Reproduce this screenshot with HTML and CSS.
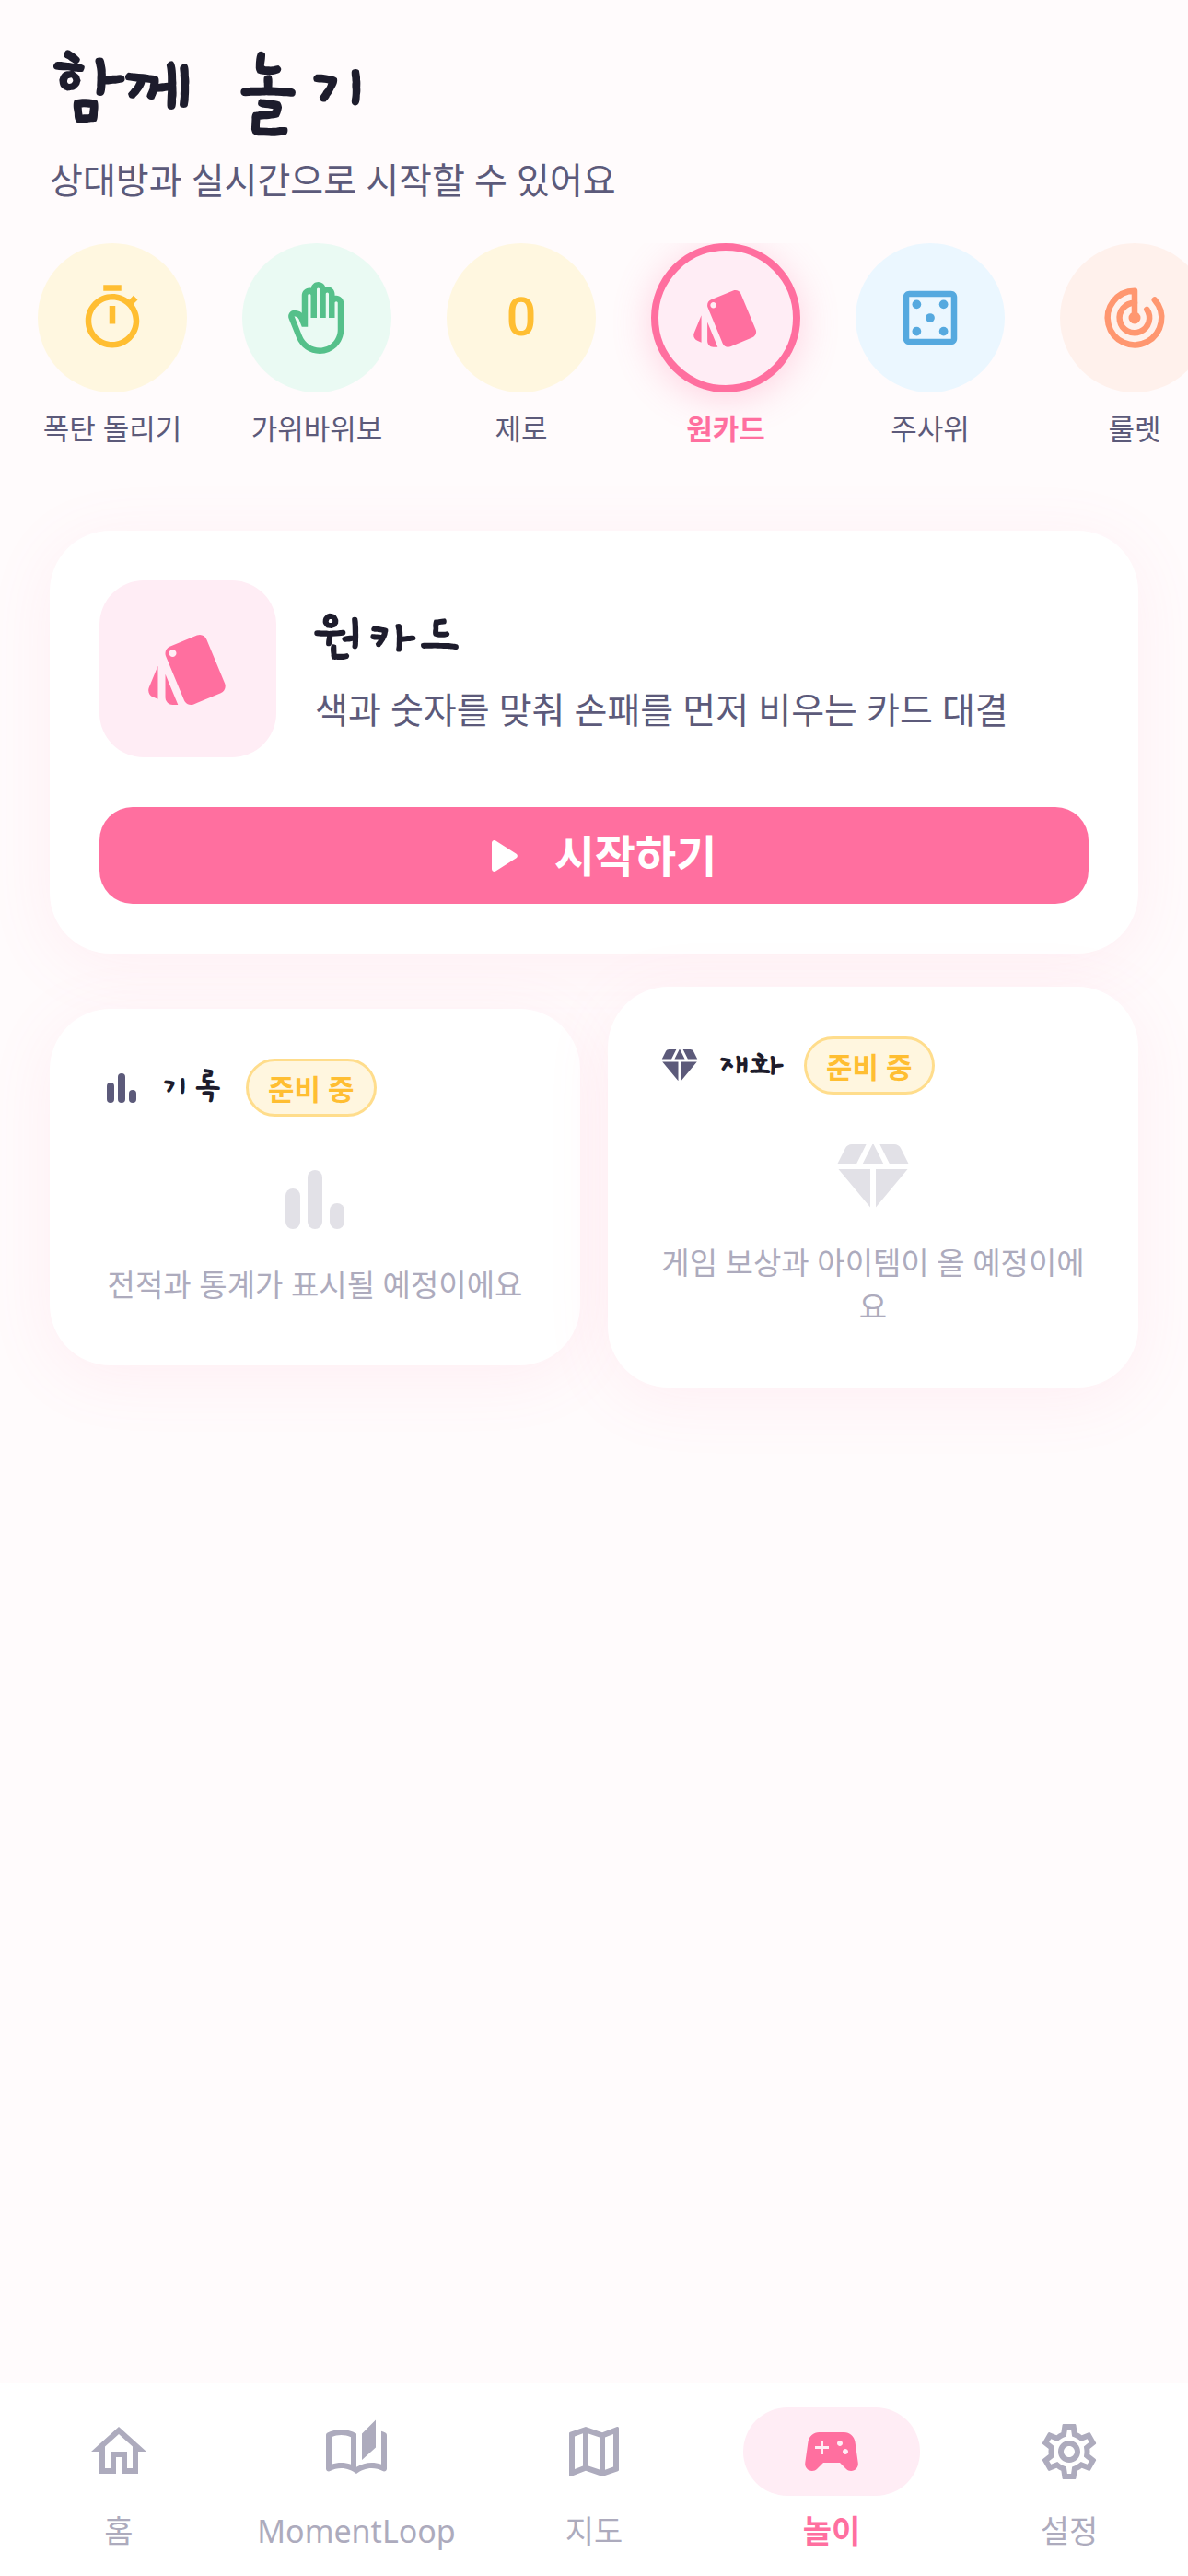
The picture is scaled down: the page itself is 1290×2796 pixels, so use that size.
FILE: index.html
```html
<!DOCTYPE html>
<html lang="ko">
<head>
<meta charset="utf-8">
<meta name="viewport" content="width=device-width, initial-scale=1">
<title>함께 놀기</title>
<link rel="stylesheet" href="styles.css">
</head>
<body>
<svg class="sprite" aria-hidden="true">
  <symbol id="i-style" viewBox="0 0 24 24"><path d="M2.53 19.65l1.34.56v-9.03l-2.43 5.86c-.41 1.02.08 2.19 1.09 2.61zm19.5-3.7L17.07 3.98c-.31-.75-1.04-1.21-1.81-1.23-.26 0-.53.04-.79.15L7.1 5.95c-.75.31-1.21 1.03-1.23 1.8-.01.27.04.54.15.8l4.96 11.97c.31.76 1.05 1.22 1.83 1.23.26 0 .52-.05.77-.15l7.36-3.05c1.02-.42 1.51-1.59 1.09-2.6zM7.88 8.75c-.55 0-1-.45-1-1s.45-1 1-1 1 .45 1 1-.45 1-1 1zm-2 11c0 1.1.9 2 2 2h1.45l-3.45-8.34v6.34z"/></symbol>
  <symbol id="i-bars" viewBox="0 0 24 24"><rect x="4" y="9" width="4" height="11" rx="2"/><rect x="10" y="4" width="4" height="16" rx="2"/><rect x="16" y="13" width="4" height="7" rx="2"/></symbol>
  <symbol id="i-gem" viewBox="0 0 24 24"><path d="M12.16 3h-.32L9.21 8.25h5.58L12.16 3zm4.3 5.25h5.16l-2.07-4.14C19.21 3.43 18.52 3 17.76 3h-3.93l2.63 5.25zm4.92 1.5h-8.63V20.1l8.63-10.35zM11.25 20.1V9.75H2.62l8.63 10.35zM7.54 8.25L10.16 3H6.24c-.76 0-1.45.43-1.79 1.11L2.38 8.25h5.16z"/></symbol>
</svg>

<header class="header">
  <h1 class="header-title">함께 놀기</h1>
  <p class="header-sub">상대방과 실시간으로 시작할 수 있어요</p>
</header>

<main class="main">
  <div class="games">
    <button class="game game-yellow" type="button">
      <span class="game-disc"><svg viewBox="0 0 24 24"><path d="M9 1h6v2H9V1zm10.03 6.39l1.42-1.42c-.43-.51-.9-.99-1.41-1.41l-1.42 1.42C16.07 4.74 14.12 4 12 4c-4.97 0-9 4.03-9 9s4.02 9 9 9 9-4.03 9-9c0-2.12-.74-4.07-1.97-5.61zM12 20c-3.87 0-7-3.13-7-7s3.13-7 7-7 7 3.13 7 7-3.13 7-7 7zM11 8h2v6h-2z"/></svg></span>
      <span class="game-label">폭탄 돌리기</span>
    </button>
    <button class="game game-green" type="button">
      <span class="game-disc"><svg viewBox="0 0 24 24"><path d="M21 7c0-1.38-1.12-2.5-2.5-2.5-.17 0-.34.02-.5.05V4c0-1.38-1.12-2.5-2.5-2.5-.23 0-.46.03-.67.09C14.46.66 13.56 0 12.5 0c-1.23 0-2.25.89-2.46 2.06C9.87 2.02 9.69 2 9.5 2 8.12 2 7 3.12 7 4.5v5.89c-.34-.31-.76-.54-1.22-.66L5.01 9.52c-.83-.23-1.7.09-2.19.83-.38.57-.4 1.31-.15 1.95l2.56 6.43C6.49 21.91 9.57 24 13 24c4.42 0 8-3.58 8-8V7zm-2 9c0 3.31-2.69 6-6 6-2.61 0-4.95-1.59-5.91-4.01l-2.6-6.54.53.14c.46.12.83.46 1 .9L7 15h2V4.5c0-.28.22-.5.5-.5s.5.22.5.5V12h2V2.5c0-.28.22-.5.5-.5s.5.22.5.5V12h2V4c0-.28.22-.5.5-.5s.5.22.5.5v8h2V7c0-.28.22-.5.5-.5s.5.22.5.5v9z"/></svg></span>
      <span class="game-label">가위바위보</span>
    </button>
    <button class="game game-yellow" type="button">
      <span class="game-disc"><svg viewBox="0 0 24 24"><path d="M16.14 12.5c0 1-.1 1.85-.3 2.55s-.48 1.27-.83 1.7c-.36.44-.79.75-1.3.95s-1.07.3-1.7.3c-.62 0-1.18-.1-1.69-.3-.51-.2-.95-.51-1.31-.95s-.65-1.01-.85-1.7c-.2-.7-.3-1.55-.3-2.55v-2.04c0-1 .1-1.85.3-2.55.2-.7.48-1.26.84-1.69.36-.43.8-.74 1.31-.93C10.81 5.1 11.38 5 12 5c.63 0 1.19.1 1.7.29.51.19.95.5 1.31.93.36.43.64.99.84 1.69.2.7.3 1.54.3 2.55v2.04zm-2.11-2.36c0-.64-.05-1.18-.13-1.62-.09-.44-.22-.79-.4-1.06-.17-.27-.39-.46-.64-.58-.25-.13-.54-.19-.86-.19s-.61.06-.86.18-.47.31-.64.58c-.17.27-.31.62-.4 1.06s-.13.98-.13 1.62v2.67c0 .64.05 1.18.14 1.62.09.45.23.81.4 1.09s.39.48.64.61.54.19.87.19.62-.06.87-.19.46-.33.63-.61c.17-.28.3-.64.39-1.09.09-.45.13-.99.13-1.62v-2.66z"/></svg></span>
      <span class="game-label">제로</span>
    </button>
    <button class="game game-active" type="button" aria-pressed="true">
      <span class="game-disc"><svg><use href="#i-style"/></svg></span>
      <span class="game-label">원카드</span>
    </button>
    <button class="game game-blue" type="button">
      <span class="game-disc"><svg viewBox="0 0 24 24"><path d="M19 5v14H5V5h14m0-2H5c-1.1 0-2 .9-2 2v14c0 1.1.9 2 2 2h14c1.1 0 2-.9 2-2V5c0-1.1-.9-2-2-2z"/><circle cx="7.5" cy="7.5" r="1.5"/><circle cx="16.5" cy="7.5" r="1.5"/><circle cx="12" cy="12" r="1.5"/><circle cx="7.5" cy="16.5" r="1.5"/><circle cx="16.5" cy="16.5" r="1.5"/></svg></span>
      <span class="game-label">주사위</span>
    </button>
    <button class="game game-orange" type="button">
      <span class="game-disc"><svg viewBox="0 0 24 24"><g fill="none" stroke="currentColor" stroke-width="2" stroke-linecap="round" stroke-linejoin="round"><path d="M12 12V3a9 9 0 1 0 6.7 3"/><path d="M12 7a5 5 0 1 0 4.1 2.2"/></g><circle cx="12" cy="12" r="2"/></svg></span>
      <span class="game-label">룰렛</span>
    </button>
  </div>

  <section class="card feature">
    <div class="feature-head">
      <span class="feature-tile"><svg><use href="#i-style"/></svg></span>
      <div class="feature-text">
        <h2 class="feature-title">원카드</h2>
        <p class="feature-desc">색과 숫자를 맞춰 손패를 먼저 비우는 카드 대결</p>
      </div>
    </div>
    <button class="start" type="button">
      <svg viewBox="0 0 24 24"><path d="M8 6.82v10.36c0 .79.87 1.27 1.54.84l8.14-5.18c.62-.39.62-1.29 0-1.69L9.54 5.98C8.87 5.55 8 6.03 8 6.82z"/></svg>
      <span>시작하기</span>
    </button>
  </section>

  <div class="panels">
    <section class="card panel">
      <div class="panel-head">
        <svg><use href="#i-bars"/></svg>
        <h3 class="panel-title">기록</h3>
        <span class="badge">준비 중</span>
      </div>
      <svg class="panel-art"><use href="#i-bars"/></svg>
      <p class="panel-text">전적과 통계가 표시될 예정이에요</p>
    </section>
    <section class="card panel">
      <div class="panel-head">
        <svg><use href="#i-gem"/></svg>
        <h3 class="panel-title">재화</h3>
        <span class="badge">준비 중</span>
      </div>
      <svg class="panel-art"><use href="#i-gem"/></svg>
      <p class="panel-text">게임 보상과 아이템이 올 예정이에요</p>
    </section>
  </div>
</main>

<nav class="nav">
  <a class="nav-item" href="#home">
    <span class="nav-icon"><svg viewBox="0 0 24 24"><path d="M12 5.69l5 4.5V18h-2v-6H9v6H7v-7.81l5-4.5M12 3L2 12h3v8h6v-6h2v6h6v-8h3L12 3z"/></svg></span>
    <span>홈</span>
  </a>
  <a class="nav-item" href="#momentloop">
    <span class="nav-icon"><svg viewBox="0 0 24 24"><path d="M22.47 5.2c-.47-.24-.96-.44-1.47-.61v12.03c-1.14-.41-2.31-.62-3.5-.62-1.9 0-3.78.54-5.5 1.58V5.48C10.38 4.55 8.51 4 6.5 4c-1.79 0-3.48.44-4.97 1.2C1.2 5.36 1 5.71 1 6.08v12.08c0 .58.47.99 1 .99.16 0 .32-.04.48-.12C3.69 18.4 5.05 18 6.5 18c2.07 0 3.98.82 5.5 2 1.52-1.18 3.43-2 5.5-2 1.45 0 2.81.4 4.02 1.04.16.08.32.12.48.12.52 0 1-.41 1-.99V6.08c0-.37-.2-.72-.53-.88zM10 16.62C8.86 16.21 7.69 16 6.5 16s-2.36.21-3.5.62V6.71C4.11 6.24 5.28 6 6.5 6c1.2 0 2.39.25 3.5.72v9.9zM19 .5l-5 5V15l5-4.5V.5z"/></svg></span>
    <span>MomentLoop</span>
  </a>
  <a class="nav-item" href="#map">
    <span class="nav-icon"><svg viewBox="0 0 24 24"><path d="M20.5 3l-.16.03L15 5.1 9 3 3.36 4.9c-.21.07-.36.25-.36.48V20.5c0 .28.22.5.5.5l.16-.03L9 18.9l6 2.1 5.64-1.9c.21-.07.36-.25.36-.48V3.5c0-.28-.22-.5-.5-.5zM10 5.47l4 1.4v11.66l-4-1.4V5.47zm-5 .99l3-1.01v11.7l-3 1.16V6.46zm14 11.08l-3 1.01V6.86l3-1.16v11.84z"/></svg></span>
    <span>지도</span>
  </a>
  <a class="nav-item nav-active" href="#play" aria-current="page">
    <span class="nav-icon"><svg viewBox="0 0 24 24"><path d="M21.58 16.09l-1.09-7.66C20.21 6.46 18.52 5 16.53 5H7.47C5.48 5 3.79 6.46 3.51 8.43l-1.09 7.66C2.2 17.63 3.39 19 4.94 19c.68 0 1.32-.27 1.8-.75L9 16h6l2.25 2.25c.48.48 1.13.75 1.8.75 1.56 0 2.75-1.37 2.53-2.91zM11 11H9v2H8v-2H6v-1h2V8h1v2h2v1zm4-1c-.55 0-1-.45-1-1s.45-1 1-1 1 .45 1 1-.45 1-1 1zm2 3c-.55 0-1-.45-1-1s.45-1 1-1 1 .45 1 1-.45 1-1 1z"/></svg></span>
    <span>놀이</span>
  </a>
  <a class="nav-item" href="#settings">
    <span class="nav-icon"><svg viewBox="0 0 24 24"><path d="M19.43 12.98c.04-.32.07-.64.07-.98 0-.34-.03-.66-.07-.98l2.11-1.65c.19-.15.24-.42.12-.64l-2-3.46c-.09-.16-.26-.25-.44-.25-.06 0-.12.01-.17.03l-2.49 1c-.52-.4-1.08-.73-1.69-.98l-.38-2.65C14.46 2.18 14.25 2 14 2h-4c-.25 0-.46.18-.49.42l-.38 2.65c-.61.25-1.17.59-1.69.98l-2.49-1c-.06-.02-.12-.03-.18-.03-.17 0-.34.09-.43.25l-2 3.46c-.13.22-.07.49.12.64l2.11 1.65c-.04.32-.07.65-.07.98 0 .33.03.66.07.98l-2.11 1.65c-.19.15-.24.42-.12.64l2 3.46c.09.16.26.25.44.25.06 0 .12-.01.17-.03l2.49-1c.52.4 1.08.73 1.69.98l.38 2.65c.03.24.24.42.49.42h4c.25 0 .46-.18.49-.42l.38-2.65c.61-.25 1.17-.59 1.69-.98l2.49 1c.06.02.12.03.18.03.17 0 .34-.09.43-.25l2-3.46c.12-.22.07-.49-.12-.64l-2.11-1.65zm-1.98-1.71c.04.31.05.52.05.73 0 .21-.02.43-.05.73l-.14 1.13.89.7 1.08.84-.7 1.21-1.27-.51-1.04-.42-.9.68c-.43.32-.84.56-1.25.73l-1.06.43-.16 1.13-.2 1.35h-1.4l-.19-1.35-.16-1.13-1.06-.43c-.43-.18-.83-.41-1.23-.71l-.91-.7-1.06.43-1.27.51-.7-1.21 1.08-.84.89-.7-.14-1.13c-.03-.31-.05-.54-.05-.74s.02-.43.05-.73l.14-1.13-.89-.7-1.08-.84.7-1.21 1.27.51 1.04.42.9-.68c.43-.32.84-.56 1.25-.73l1.06-.43.16-1.13.2-1.35h1.39l.19 1.35.16 1.13 1.06.43c.43.18.83.41 1.23.71l.91.7 1.06-.43 1.27-.51.7 1.21-1.07.85-.89.7.14 1.13zM12 8c-2.21 0-4 1.79-4 4s1.79 4 4 4 4-1.79 4-4-1.79-4-4-4zm0 6c-1.1 0-2-.9-2-2s.9-2 2-2 2 .9 2 2-.9 2-2 2z"/></svg></span>
    <span>설정</span>
  </a>
</nav>
</body>
</html>
```

FILE: styles.css
```css
:root {
  --pink: #ff6f9f;
  --pink-soft: #ffedf5;
  --ink: #1d1c2c;
  --ink-soft: #5c5a7a;
  --muted: #adabbd;
  --amber: #ffbe32;
  --amber-soft: #fff6df;
  --display: "Gaegu", "Nanum Pen Script", "Noto Sans CJK KR", sans-serif;
}

*, *::before, *::after { box-sizing: border-box; }

body {
  margin: 0;
  min-height: 100vh;
  display: flex;
  flex-direction: column;
  background: #fffbfc;
  color: var(--ink-soft);
  font-family: "Noto Sans", "Noto Sans CJK KR", sans-serif;
  font-size: 39px;
  line-height: 54px;
}

h1, h2, h3, p { margin: 0; }
button { font: inherit; border: 0; padding: 0; background: none; cursor: pointer; }
a { color: inherit; text-decoration: none; }
svg { display: block; flex: none; fill: currentColor; }
.sprite { position: absolute; width: 0; height: 0; }

/* Header */
.header { display: flex; flex-direction: column; gap: 15px; padding: 48px 54px 42px; }
.header-title { font-family: var(--display); font-size: 96px; line-height: 105px; color: var(--ink); }

.main { flex: 1; display: flex; flex-direction: column; }

/* Game picker */
.games { display: flex; gap: 26px; padding: 0 24px 42px; overflow-x: auto; scrollbar-width: none; }
.game { flex: none; width: 196px; display: flex; flex-direction: column; align-items: center; gap: 18px; }
.game-disc { width: 162px; height: 162px; border-radius: 50%; display: grid; place-items: center; }
.game-disc svg { width: 78px; height: 78px; }
.game-label { font-size: 31px; line-height: 42px; color: var(--ink-soft); white-space: nowrap; }
.game-yellow .game-disc { background: #fff7e0; color: var(--amber); }
.game-green .game-disc { background: #eafaf3; color: #55c08a; }
.game-blue .game-disc { background: #ebf7ff; color: #55a9df; }
.game-orange .game-disc { background: #fff1ec; color: #ff9770; }
.game-active .game-disc {
  background: var(--pink-soft);
  color: var(--pink);
  border: 8px solid var(--pink);
  box-shadow: 0 6px 42px rgba(255, 111, 159, .3);
}
.game-active .game-label { color: var(--pink); font-weight: 700; }

/* Cards */
.card {
  background: #fff;
  border-radius: 66px;
  padding: 54px;
  box-shadow: 0 12px 72px rgba(255, 111, 159, .09);
}

.feature { margin: 48px 54px 0; display: flex; flex-direction: column; gap: 54px; }
.feature-head { display: flex; align-items: center; gap: 42px; }
.feature-tile { flex: none; width: 192px; height: 192px; border-radius: 48px; display: grid; place-items: center; background: var(--pink-soft); color: var(--pink); }
.feature-tile svg { width: 96px; height: 96px; }
.feature-text { display: flex; flex-direction: column; gap: 9px; }
.feature-title { font-family: var(--display); font-size: 66px; line-height: 78px; color: var(--ink); }
.start {
  height: 105px;
  border-radius: 36px;
  display: flex;
  align-items: center;
  justify-content: center;
  gap: 24px;
  background: var(--pink);
  color: #fff;
  font-size: 48px;
  font-weight: 700;
}
.start svg { width: 66px; height: 66px; }

.panels { display: flex; align-items: center; gap: 30px; padding: 36px 54px; }
.panel { flex: 1 1 0; display: flex; flex-direction: column; padding-bottom: 63px; }
.panel-head { display: flex; align-items: center; gap: 18px; }
.panel-head svg { width: 48px; height: 48px; }
.panel-title { font-family: var(--display); font-size: 42px; line-height: 54px; color: var(--ink); }
.badge {
  margin-left: 6px;
  padding: 9px 21px 6px;
  border: 3px solid #ffdd8c;
  border-radius: 32px;
  background: var(--amber-soft);
  color: var(--amber);
  font-size: 31px;
  line-height: 42px;
  font-weight: 700;
}
.panel-art { width: 96px; height: 96px; margin: 42px auto 21px; color: #e2e1e7; }
.panel-text { font-size: 33px; line-height: 48px; color: var(--muted); text-align: center; }

/* Bottom navigation */
.nav { display: flex; padding: 27px 0 25px; background: #fff; }
.nav-item { flex: 1 1 0; display: flex; flex-direction: column; align-items: center; gap: 14px; font-size: 34px; line-height: 48px; color: var(--muted); }
.nav-icon { width: 192px; height: 96px; border-radius: 48px; display: grid; place-items: center; }
.nav-icon svg { width: 72px; height: 72px; }
.nav-active { color: var(--pink); font-weight: 700; }
.nav-active .nav-icon { background: var(--pink-soft); }
```
